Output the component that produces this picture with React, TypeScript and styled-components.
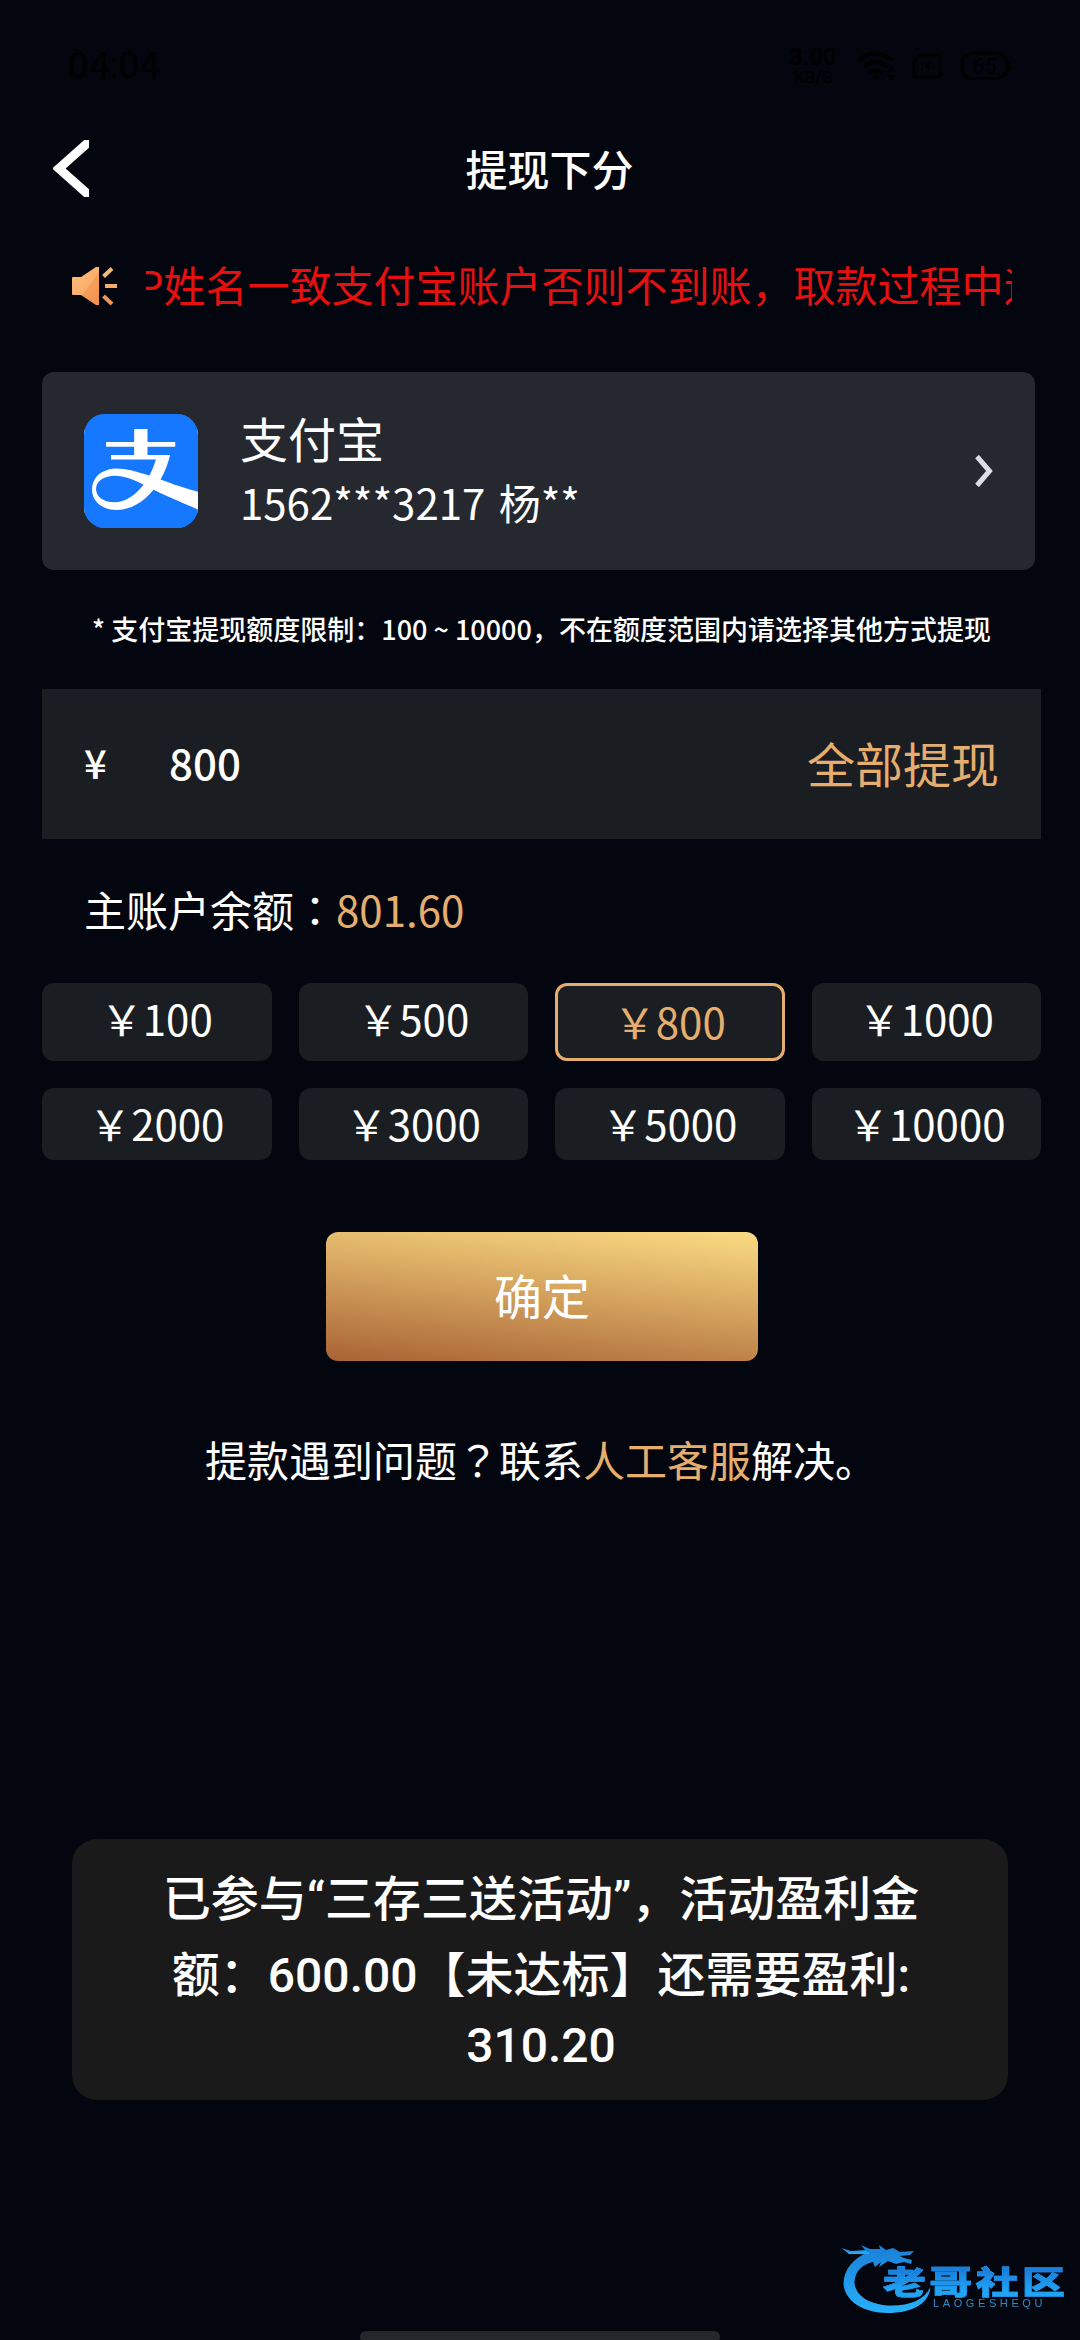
import React from "react";
import styled, { createGlobalStyle, css } from "styled-components";
import { SiAlipay } from "react-icons/si";

const sans = `"Noto Sans CJK SC", "Noto Sans", sans-serif`;
const gold = "#e6ae6e";
const panel = "#1a1d21";

const GlobalStyle = createGlobalStyle`
  html, body { margin: 0; background: #03060e; }
  *, *::before, *::after { box-sizing: border-box; }
  button { margin: 0; padding: 0; border: 0; background: none; font: inherit; color: inherit; }
`;

const Screen = styled.div`
  position: relative;
  display: flex;
  flex-direction: column;
  width: 1080px;
  height: 2340px;
  overflow: hidden;
  background: #03060e;
  color: #fff;
  font: 400 42px/60px ${sans};
`;

const StatusBar = styled.div`
  display: flex;
  justify-content: space-between;
  align-items: center;
  height: 132px;
  padding: 0 69px 0 68px;
  color: #000;
  font-family: Roboto, sans-serif;
`;

const Clock = styled.span`
  font-size: 37px;
  line-height: 44px;
`;

const StatusIcons = styled.div`
  display: flex;
  align-items: center;
  svg { display: block; }
`;

const Speed = styled.div`
  display: flex;
  flex-direction: column;
  align-items: center;
  width: 50px;
  margin-right: 19px;
  font-weight: 700;
  font-size: 23px;
  line-height: 21px;
  small { font-size: 17px; line-height: 18px; font-weight: 500; }
`;

const Gap = styled.span<{ $w: number }>`
  width: ${(p) => p.$w}px;
`;

const Header = styled.header`
  display: grid;
  grid-template-columns: 71px 1fr 71px;
  align-items: center;
  height: 73px;
  padding: 0 0 0 19px;
`;

const BackButton = styled.button`
  display: flex;
  padding-left: 34px;
`;

const Title = styled.h1`
  margin: -1px 0 0;
  text-align: center;
  font-size: 42px;
  font-weight: 500;
  line-height: 60px;
`;

const Announcement = styled.div`
  display: flex;
  align-items: center;
  height: 60px;
  margin: 51px 68px 0 72px;
`;

const Marquee = styled.div`
  width: 866px;
  margin: -5px 0 0 28px;
  overflow: hidden;
  white-space: nowrap;
  color: #e5100f;
`;

const MarqueeText = styled.span`
  display: inline-block;
  margin-left: -9px;
`;

const AccountCard = styled.section`
  display: flex;
  align-items: center;
  width: 993px;
  height: 198px;
  margin: 56px 0 0 42px;
  padding: 0 42px;
  border-radius: 12px;
  background: #25282f;
`;

const PayLogo = styled.div`
  flex: none;
  width: 114px;
  height: 114px;
  overflow: hidden;
  border-radius: 21px;
  color: #1677ff;
  background: linear-gradient(#fff, #fff) center / 100% 84px no-repeat, #1677ff;
  svg { display: block; width: 116px; height: 116px; margin: -1px; }
`;

const AccountInfo = styled.div`
  flex: 1;
  margin: -4px 0 0 42px;
`;

const AccountName = styled.div`
  font-size: 48px;
  line-height: 65px;
`;

const AccountNumber = styled.div`
  font-size: 42px;
  line-height: 63px;
  word-spacing: 4px;
`;

const LimitNote = styled.p`
  margin: 39px 0 0;
  padding-left: 3px;
  text-align: center;
  font-size: 27px;
  font-weight: 500;
  line-height: 40px;
`;

const AmountBar = styled.div`
  display: flex;
  align-items: center;
  height: 150px;
  margin: 40px 39px 0 42px;
  padding: 0 42px 4px;
  background: ${panel};
`;

const Currency = styled.span`
  width: 85px;
  font-size: 40px;
  font-weight: 500;
`;

const Amount = styled.span`
  flex: 1;
  font-weight: 500;
`;

const AllButton = styled.button`
  color: ${gold};
  font-size: 48px;
  line-height: 70px;
`;

const Balance = styled.div`
  margin: 40px 0 0 84px;
`;

/* The JP face sets colon and question mark in the middle of their cell. */
const WidePunct = styled.span`
  font-family: "Noto Sans CJK JP", sans-serif;
`;

const Accent = styled.span`
  color: ${gold};
`;

const Options = styled.div`
  display: grid;
  grid-template-columns: repeat(4, 1fr);
  grid-template-rows: 78px 72px;
  gap: 27px;
  margin: 44px 39px 0 42px;
`;

const Option = styled.button<{ $selected: boolean }>`
  display: flex;
  justify-content: center;
  align-items: flex-start;
  border-radius: 12px;
  background: ${panel};
  line-height: 69px;
  ${(p) =>
    p.$selected &&
    css`
      border: 3px solid ${gold};
      color: ${gold};
    `}
`;

const Confirm = styled.button`
  width: 432px;
  height: 129px;
  margin: 72px 0 0 326px;
  padding-bottom: 4px;
  border-radius: 12px;
  background: linear-gradient(6deg, #a96335, #fbdc83);
  font-size: 48px;
  line-height: 125px;
`;

const Help = styled.p`
  margin: 68px 0 0;
  padding-left: 2px;
  text-align: center;
`;

const Toast = styled.div`
  position: absolute;
  top: 1839px;
  left: 72px;
  width: 936px;
  height: 261px;
  padding: 23px 0 0 2px;
  border-radius: 25px;
  background: #1a1a1a;
  text-align: center;
  font: 500 48px/76px Roboto, ${sans};
`;

const ToastLine = styled.div<{ $h?: number }>`
  height: ${(p) => p.$h ?? 76}px;
  line-height: ${(p) => p.$h ?? 76}px;
  white-space: nowrap;
`;

const Watermark = styled.div`
  position: absolute;
  left: 838px;
  top: 2240px;
  width: 232px;
  height: 78px;
  filter: blur(0.6px);
  > svg { position: absolute; left: 0; top: 0; }
`;

const MarkName = styled.div`
  position: absolute;
  left: 45px;
  top: 18px;
  transform: scaleX(1.34);
  transform-origin: 0 50%;
  color: transparent;
  background: linear-gradient(#1a7fdc 30%, #22a4f5 75%);
  background-clip: text;
  -webkit-text-stroke: 0.6px #1e90e8;
  font: 900 32px/44px ${sans};
  letter-spacing: 2.6px;
  white-space: nowrap;
`;

const MarkLatin = styled.div`
  position: absolute;
  left: 95px;
  top: 56px;
  color: #2e8bc8;
  font: 400 11px/14px "Liberation Sans", sans-serif;
  letter-spacing: 3.6px;
`;

const GestureBar = styled.div`
  position: absolute;
  left: 360px;
  bottom: -3px;
  width: 360px;
  height: 12px;
  border-radius: 6px;
  background: #24272c;
`;

const amounts = [100, 500, 800, 1000, 2000, 3000, 5000, 10000];

const WifiIcon = () => (
  <svg width="40" height="30" viewBox="0 0 40 30" fill="none" stroke="#000" strokeWidth="4">
    <path d="M2 9Q18-4 35 9M7 16Q18 6 30 16M12 22Q18 17 25 22" />
    <circle cx="18.500" cy="26" r="2.500" fill="#000" stroke="none" />
    <path d="M30 21l4.500-5 4.500 5zM30 24l4.500 5 4.500-5z" fill="#000" stroke="none" />
  </svg>
);

const SimIcon = () => (
  <svg width="30" height="26" viewBox="0 0 30 26" fill="none" stroke="#000" strokeWidth="3">
    <path d="M8 2H26Q28 2 28 4V22Q28 24 26 24H4Q2 24 2 22V8Z" />
    <path d="M10 8.500v9M21 8.500v9" strokeWidth="1" />
    <path d="M12 13l6-4.500v9z" fill="#000" stroke="none" />
  </svg>
);

const BatteryIcon = () => (
  <svg width="50" height="28" viewBox="0 0 50 28">
    <rect x="1.500" y="1.500" width="44" height="25" rx="9" fill="none" stroke="#000" strokeWidth="3" />
    <path d="M47 9q3 1 3 5t-3 5z" />
    <text x="23.500" y="21.500" textAnchor="middle" fontFamily="Roboto" fontStyle="italic" fontSize="22">65</text>
  </svg>
);

const HornIcon = () => (
  <svg width="46" height="38" viewBox="0 0 46 38">
    <defs>
      <linearGradient id="horn" x1="0.100" y1="0.100" x2="0.900" y2="0.900">
        <stop offset="0" stopColor="#fcb878" />
        <stop offset="0.550" stopColor="#fbb06c" />
        <stop offset="0.600" stopColor="#f79f5c" />
        <stop offset="1" stopColor="#f4924e" />
      </linearGradient>
    </defs>
    <path fill="url(#horn)" d="M0 11Q0 10 1 10H9L24 0H27V38H24L9 28H1Q0 28 0 27Z" />
    <path stroke="#f6b878" strokeWidth="4" d="M31.500 9.500L40 1.500" />
    <path stroke="#f4ab6c" strokeWidth="4" d="M33 19H45" />
    <path stroke="#e9955c" strokeWidth="4" d="M31.500 29L40 37" />
  </svg>
);

const DragonMark = () => (
  <svg width="100" height="78" viewBox="0 0 100 78">
    <defs>
      <linearGradient id="dragon" x1="0" y1="0" x2="0" y2="1">
        <stop offset="0" stopColor="#1a7fd6" />
        <stop offset="1" stopColor="#27b0fb" />
      </linearGradient>
    </defs>
    <g fill="url(#dragon)">
      <path d="M30 12C16 18 6 29 5.500 43C6 60 24 73 50 73C72 73 91 65 92.500 47C86 60 72 65.500 54 65.500C34 65.500 17 57 16.500 42C17 31 25 24 35 22L37 27L43 22L41 27L50 21L58 24L66 22L73 24L74 20L66 18L62 16L72 15L76 11L62 12L55 8L48 10L41 5L42 9L32 9L23 5L27 10Z" />
      <path d="M3.500 8L11 14L32 14L28 10L13 11Z" />
    </g>
  </svg>
);

export default function App() {
  return (
    <>
      <GlobalStyle />
      <Screen>
        <StatusBar>
          <Clock>04:04</Clock>
          <StatusIcons>
            <Speed>
              3.00
              <small>KB/S</small>
            </Speed>
            <WifiIcon />
            <Gap $w={15} />
            <SimIcon />
            <Gap $w={19} />
            <BatteryIcon />
          </StatusIcons>
        </StatusBar>

        <Header>
          <BackButton aria-label="返回">
            <svg width="36" height="57" viewBox="0 0 36 57" fill="none" stroke="#fff" strokeWidth="9">
              <path d="M38 0L6 28.500L38 57" />
            </svg>
          </BackButton>
          <Title>提现下分</Title>
        </Header>

        <Announcement>
          <HornIcon />
          <Marquee>
            <MarqueeText>P姓名一致支付宝账户否则不到账，取款过程中遇</MarqueeText>
          </Marquee>
        </Announcement>

        <AccountCard>
          <PayLogo>
            <SiAlipay />
          </PayLogo>
          <AccountInfo>
            <AccountName>支付宝</AccountName>
            <AccountNumber>1562***3217 杨**</AccountNumber>
          </AccountInfo>
          <svg width="18" height="32" viewBox="0 0 18 32" fill="none" stroke="#dcdde6" strokeWidth="5">
            <path d="M2 1.500L14.500 16L2 30.500" />
          </svg>
        </AccountCard>

        <LimitNote>* 支付宝提现额度限制：100 ~ 10000，不在额度范围内请选择其他方式提现</LimitNote>

        <AmountBar>
          <Currency>¥</Currency>
          <Amount>800</Amount>
          <AllButton>全部提现</AllButton>
        </AmountBar>

        <Balance>
          主账户余额<WidePunct>：</WidePunct>
          <Accent>801.60</Accent>
        </Balance>

        <Options>
          {amounts.map((n) => (
            <Option key={n} $selected={n === 800}>
              ￥{n}
            </Option>
          ))}
        </Options>

        <Confirm>确定</Confirm>

        <Help>
          提款遇到问题<WidePunct>？</WidePunct>联系<Accent>人工客服</Accent>解决。
        </Help>

        <Toast>
          <ToastLine>已参与“三存三送活动”，活动盈利金</ToastLine>
          <ToastLine>额：600.00【未达标】还需要盈利:</ToastLine>
          <ToastLine $h={64}>310.20</ToastLine>
        </Toast>

        <Watermark>
          <DragonMark />
          <MarkName>老哥社区</MarkName>
          <MarkLatin>LAOGESHEQU</MarkLatin>
        </Watermark>
        <GestureBar />
      </Screen>
    </>
  );
}
